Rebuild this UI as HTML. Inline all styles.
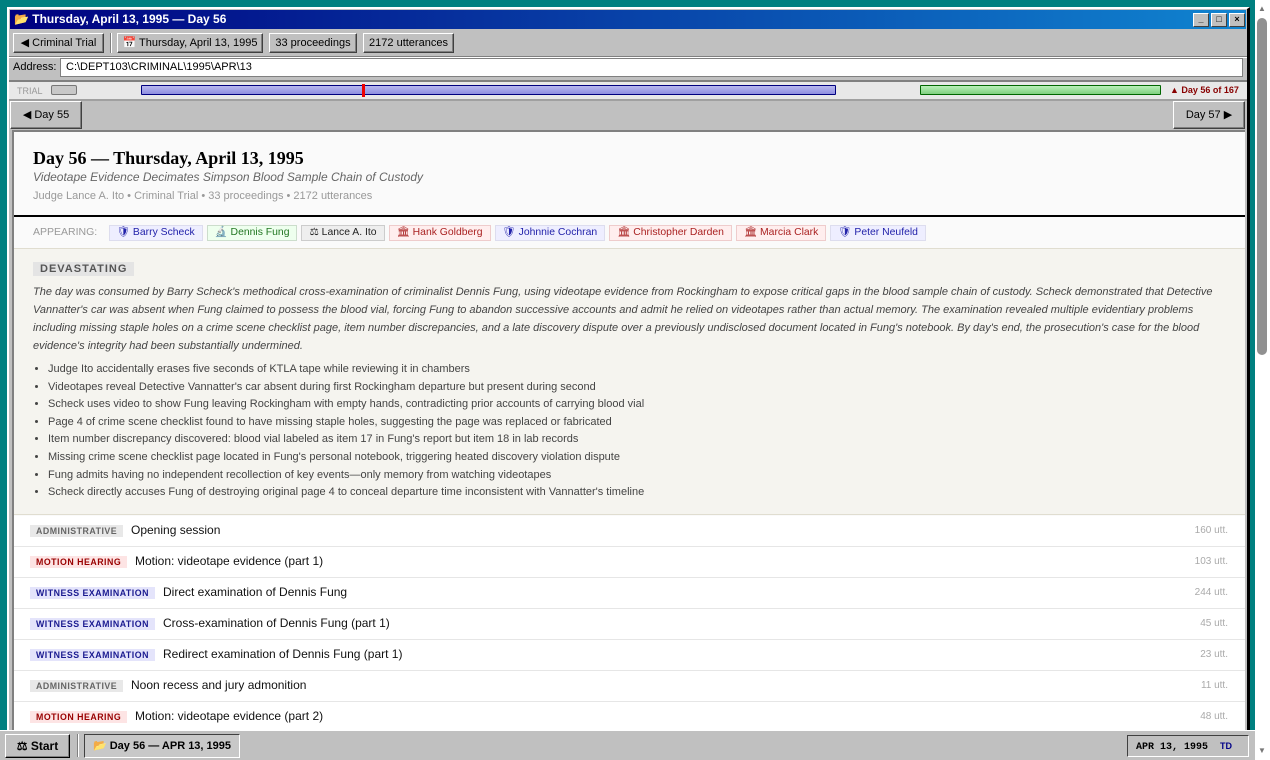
<!DOCTYPE html>
<html><head><meta charset="utf-8"><style>
*{box-sizing:border-box;margin:0;padding:0}
body{width:1270px;height:760px;overflow:hidden;background:#008080;font-family:"Liberation Sans",sans-serif;position:relative}
.win{position:absolute;left:7px;top:7px;width:1243px;height:723px;background:#c0c0c0;border-top:2px solid #fff;border-left:2px solid #fff;border-right:3px solid #000;overflow:hidden}
.title{position:absolute;left:1px;top:1px;right:1px;height:19px;background:linear-gradient(90deg,#000080,#1084d0);color:#fff;font-weight:bold;font-size:12px;line-height:19px;padding-left:4px}
.tb{position:absolute;top:3px;width:16px;height:14px;background:#c0c0c0;border:1px solid;border-color:#fff #404040 #404040 #fff;font-size:9px;line-height:11px;text-align:center;color:#000}
.btn{position:absolute;height:20px;background:#c0c0c0;border:1px solid;border-color:#fff #404040 #404040 #fff;box-shadow:inset -1px -1px #808080;font-size:11px;line-height:18px;padding:0 6px;color:#000;white-space:nowrap;overflow:hidden;text-align:center}
.content{position:absolute;left:3px;top:121px;width:1233px;height:610px;background:#fafafa;border-left:2px solid #808080;border-top:2px solid #808080}
.chip{display:inline-block;height:16px;font-size:10.4px;line-height:14px;padding:0 7px;border:1px solid #dde;margin-right:4px}
.row{position:absolute;left:0;width:1231px;height:31px;border-bottom:1px solid #e6e6e6;background:#fff}
.tag{position:absolute;left:16px;top:9px;height:12px;font-size:8.8px;font-weight:bold;letter-spacing:.5px;line-height:12px;padding:0 6px}
.rt{position:absolute;top:7px;font-size:12px;color:#111}
.ut{position:absolute;right:17px;top:9px;font-size:10px;color:#aaa}
ul{margin-left:36px;font-size:11px;color:#444;line-height:17.6px}
</style></head><body>
<div class="win">
 <div class="title">📂 Thursday, April 13, 1995 — Day 56
  <div class="tb" style="right:37px">_</div><div class="tb" style="right:19px">□</div><div class="tb" style="right:1px;font-weight:bold">×</div>
 </div>
 <div class="btn" style="left:4px;top:24px;width:91px">◀ Criminal Trial</div>
 <div style="position:absolute;left:101px;top:24px;width:2px;height:20px;border-left:1px solid #808080;border-right:1px solid #fff"></div>
 <div class="btn" style="left:108px;top:24px;width:146px;padding:0 2px">📅 Thursday, April 13, 1995</div>
 <div class="btn" style="left:260px;top:24px;width:88px;padding:0 2px">33 proceedings</div>
 <div class="btn" style="left:354px;top:24px;width:91px;padding:0 2px">2172 utterances</div>
 <div style="position:absolute;left:0;right:0;top:47px;border-top:1px solid #808080;border-bottom:1px solid #fff"></div>
 <div style="position:absolute;left:4px;top:52px;font-size:11px">Address:</div>
 <div style="position:absolute;left:51px;top:49px;width:1183px;height:19px;background:#fff;border:1px solid #808080;font-size:11px;line-height:17px;padding-left:5px">C:\DEPT103\CRIMINAL\1995\APR\13</div>
 <div style="position:absolute;left:0;right:0;top:71px;height:21px;background:#e8e8e8;border-top:2px solid #808080;border-bottom:2px solid #a0a0a0"></div>
 <div style="position:absolute;left:8px;top:77px;font-size:9px;color:#999">TRIAL</div>
 <div style="position:absolute;left:42px;top:76px;width:26px;height:10px;background:#c8c8c8;border:1px solid #777;border-radius:2px"></div>
 <div style="position:absolute;left:132px;top:76px;width:695px;height:10px;background:linear-gradient(#b8b8f0,#9090e0);border:1px solid #000080;border-radius:1px"></div>
 <div style="position:absolute;left:353px;top:75px;width:3px;height:13px;background:#e00"></div>
 <div style="position:absolute;left:911px;top:76px;width:241px;height:10px;background:linear-gradient(#b8f0b8,#80d080);border:1px solid #060;border-radius:1px"></div>
 <div style="position:absolute;left:1161px;top:76px;font-size:9px;font-weight:bold;color:#800">▲ Day 56 of 167</div>
 <div class="btn" style="left:1px;top:92px;height:28px;line-height:26px;width:72px">◀ Day 55</div>
 <div class="btn" style="left:1164px;top:92px;height:28px;line-height:26px;width:72px">Day 57 ▶</div>
 <div class="content">
  <div style="position:absolute;left:19px;top:16px;font-family:'Liberation Serif',serif;font-weight:bold;font-size:18px;color:#000">Day 56 — Thursday, April 13, 1995</div>
  <div style="position:absolute;left:19px;top:38px;font-style:italic;font-size:12px;color:#666">Videotape Evidence Decimates Simpson Blood Sample Chain of Custody</div>
  <div style="position:absolute;left:19px;top:58px;font-size:11px;color:#999">Judge Lance A. Ito • Criminal Trial • 33 proceedings • 2172 utterances</div>
  <div style="position:absolute;left:0;top:83px;width:1231px;height:2px;background:#000"></div>
  <div style="position:absolute;left:19px;top:93px;font-size:10.5px;color:#999;white-space:nowrap">APPEARING: &nbsp;&nbsp;
   <span class="chip" style="background:#eef;color:#22a">🛡 Barry Scheck</span><span class="chip" style="background:#efe;color:#272;border-color:#cdc">🔬 Dennis Fung</span><span class="chip" style="background:#eee;color:#222;border-color:#ccc">⚖ Lance A. Ito</span><span class="chip" style="background:#fee;color:#a22;border-color:#ecc">🏛 Hank Goldberg</span><span class="chip" style="background:#eef;color:#22a">🛡 Johnnie Cochran</span><span class="chip" style="background:#fee;color:#a22;border-color:#ecc">🏛 Christopher Darden</span><span class="chip" style="background:#fee;color:#a22;border-color:#ecc">🏛 Marcia Clark</span><span class="chip" style="background:#eef;color:#22a">🛡 Peter Neufeld</span></div>
  <div style="position:absolute;left:0;top:116px;width:1231px;height:267px;background:#f5f4ef;border-top:1px solid #e0ddd0;border-bottom:1px solid #e0ddd0">
   <div style="position:absolute;left:19px;top:13px;background:#e4e4e4;color:#555;font-size:11px;font-weight:bold;letter-spacing:1px;padding:1px 7px">DEVASTATING</div>
   <div style="position:absolute;left:19px;top:34px;width:1190px;font-style:italic;font-size:11px;color:#444;line-height:18px">The day was consumed by Barry Scheck's methodical cross-examination of criminalist Dennis Fung, using videotape evidence from Rockingham to expose critical gaps in the blood sample chain of custody. Scheck demonstrated that Detective Vannatter's car was absent when Fung claimed to possess the blood vial, forcing Fung to abandon successive accounts and admit he relied on videotapes rather than actual memory. The examination revealed multiple evidentiary problems including missing staple holes on a crime scene checklist page, item number discrepancies, and a late discovery dispute over a previously undisclosed document located in Fung's notebook. By day's end, the prosecution's case for the blood evidence's integrity had been substantially undermined.</div>
   <ul style="position:absolute;top:112px;left:-2px">
    <li>Judge Ito accidentally erases five seconds of KTLA tape while reviewing it in chambers</li>
    <li>Videotapes reveal Detective Vannatter's car absent during first Rockingham departure but present during second</li>
    <li>Scheck uses video to show Fung leaving Rockingham with empty hands, contradicting prior accounts of carrying blood vial</li>
    <li>Page 4 of crime scene checklist found to have missing staple holes, suggesting the page was replaced or fabricated</li>
    <li>Item number discrepancy discovered: blood vial labeled as item 17 in Fung's report but item 18 in lab records</li>
    <li>Missing crime scene checklist page located in Fung's personal notebook, triggering heated discovery violation dispute</li>
    <li>Fung admits having no independent recollection of key events—only memory from watching videotapes</li>
    <li>Scheck directly accuses Fung of destroying original page 4 to conceal departure time inconsistent with Vannatter's timeline</li>
   </ul>
  </div>
  <div class="row" style="top:384px"><span class="tag" style="background:#e8e8e8;color:#666">ADMINISTRATIVE</span><span class="rt" style="left:117px">Opening session</span><span class="ut">160 utt.</span></div>
  <div class="row" style="top:415px"><span class="tag" style="background:#fde4e4;color:#900">MOTION HEARING</span><span class="rt" style="left:121px">Motion: videotape evidence (part 1)</span><span class="ut">103 utt.</span></div>
  <div class="row" style="top:446px"><span class="tag" style="background:#e4e4fb;color:#1a1a90">WITNESS EXAMINATION</span><span class="rt" style="left:149px">Direct examination of Dennis Fung</span><span class="ut">244 utt.</span></div>
  <div class="row" style="top:477px"><span class="tag" style="background:#e4e4fb;color:#1a1a90">WITNESS EXAMINATION</span><span class="rt" style="left:149px">Cross-examination of Dennis Fung (part 1)</span><span class="ut">45 utt.</span></div>
  <div class="row" style="top:508px"><span class="tag" style="background:#e4e4fb;color:#1a1a90">WITNESS EXAMINATION</span><span class="rt" style="left:149px">Redirect examination of Dennis Fung (part 1)</span><span class="ut">23 utt.</span></div>
  <div class="row" style="top:539px"><span class="tag" style="background:#e8e8e8;color:#666">ADMINISTRATIVE</span><span class="rt" style="left:117px">Noon recess and jury admonition</span><span class="ut">11 utt.</span></div>
  <div class="row" style="top:570px"><span class="tag" style="background:#fde4e4;color:#900">MOTION HEARING</span><span class="rt" style="left:121px">Motion: videotape evidence (part 2)</span><span class="ut">48 utt.</span></div>
 </div>
</div>
<div style="position:absolute;left:1255px;top:0;width:15px;height:760px;background:#fff">
 <div style="position:absolute;left:3px;top:4px;font-size:8px;color:#777">▲</div>
 <div style="position:absolute;left:2px;top:18px;width:10px;height:337px;background:#909090;border-radius:5px"></div>
 <div style="position:absolute;left:3px;top:746px;font-size:8px;color:#777">▼</div>
</div>
<div style="position:absolute;left:0;top:730px;width:1255px;height:30px;background:#c0c0c0;border-top:1px solid #fff">
 <div class="btn" style="left:5px;top:3px;height:24px;line-height:22px;width:65px;font-weight:bold;font-size:12px;border-color:#fff #000 #000 #fff">⚖ Start</div>
 <div style="position:absolute;left:77px;top:3px;width:2px;height:23px;border-left:1px solid #808080;border-right:1px solid #fff"></div>
 <div class="btn" style="left:84px;top:3px;height:24px;line-height:22px;width:156px;font-weight:bold;font-size:11px;border-color:#404040 #fff #fff #404040;background:#c8c8c8;box-shadow:none">📂 Day 56 — APR 13, 1995</div>
 <div style="position:absolute;left:1127px;top:4px;width:122px;height:22px;border:1px solid;border-color:#404040 #fff #fff #404040;font-family:'Liberation Mono',monospace;font-weight:bold;font-size:10px;line-height:20px;padding-left:8px">APR 13, 1995 <span style="font-family:'Liberation Sans';color:#008;font-size:9px;margin-left:6px">TD</span></div>
</div>
</body></html>
